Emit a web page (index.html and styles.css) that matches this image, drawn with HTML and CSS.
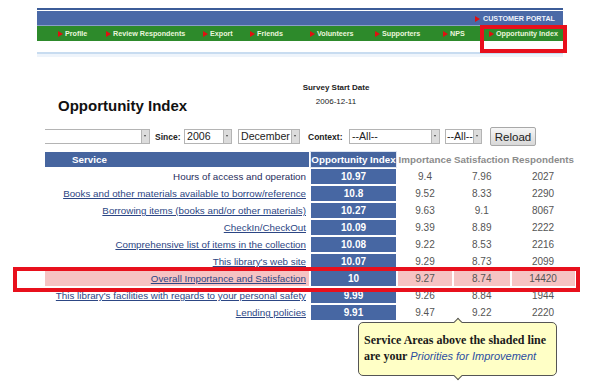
FILE: index.html
```html
<!DOCTYPE html>
<html lang="en">
<head>
  <meta charset="UTF-8" />
  <meta name="viewport" content="width=device-width, initial-scale=1.0"/>
  <title>Opportunity Index</title>
  <link rel="stylesheet" href="styles.css">
</head>
<body>
  <div class="banner">
    <div class="portal"><span class="arrow"></span>CUSTOMER PORTAL</div>
    <ul class="nav">
      <li><span class="arrow"></span>Profile</li>
      <li><span class="arrow"></span>Review Respondents</li>
      <li><span class="arrow"></span>Export</li>
      <li><span class="arrow"></span>Friends</li>
      <li><span class="arrow"></span>Volunteers</li>
      <li><span class="arrow"></span>Supporters</li>
      <li><span class="arrow"></span>NPS</li>
      <li><span class="arrow"></span>Opportunity Index</li>
    </ul>
  </div>
  <div class="rule"></div>

  <div class="intro">
    <h1>Opportunity Index</h1>
    <div class="survey">
      <b>Survey Start Date</b><br>
      2006-12-11
    </div>
  </div>

  <div class="filters">
    <div class="select sel-first"><span></span><i></i></div>
    <label class="since">Since:</label>
    <div class="select sel-year"><span>2006</span><i></i></div>
    <div class="select sel-month"><span>December</span><i></i></div>
    <label class="context">Context:</label>
    <div class="select sel-context"><span>--All--</span><i></i></div>
    <div class="select sel-small"><span>--All--</span><i></i></div>
    <button type="button">Reload</button>
  </div>

  <table class="results">
    <thead>
      <tr>
        <th class="service">Service</th>
        <th class="opp">Opportunity Index</th>
        <th>Importance</th>
        <th>Satisfaction</th>
        <th>Respondents</th>
      </tr>
    </thead>
    <tbody>
      <tr><td class="service plain">Hours of access and operation</td><td class="opp">10.97</td><td>9.4</td><td>7.96</td><td>2027</td></tr>
      <tr><td class="service"><a href="#">Books and other materials available to borrow/reference</a></td><td class="opp">10.8</td><td>9.52</td><td>8.33</td><td>2290</td></tr>
      <tr><td class="service"><a href="#">Borrowing items (books and/or other materials)</a></td><td class="opp">10.27</td><td>9.63</td><td>9.1</td><td>8067</td></tr>
      <tr><td class="service"><a href="#">CheckIn/CheckOut</a></td><td class="opp">10.09</td><td>9.39</td><td>8.89</td><td>2222</td></tr>
      <tr><td class="service"><a href="#">Comprehensive list of items in the collection</a></td><td class="opp">10.08</td><td>9.22</td><td>8.53</td><td>2216</td></tr>
      <tr><td class="service"><a href="#">This library's web site</a></td><td class="opp">10.07</td><td>9.29</td><td>8.73</td><td>2099</td></tr>
      <tr class="overall"><td class="service"><a href="#">Overall Importance and Satisfaction</a></td><td class="opp">10</td><td>9.27</td><td>8.74</td><td>14420</td></tr>
      <tr><td class="service"><a href="#">This library's facilities with regards to your personal safety</a></td><td class="opp">9.99</td><td>9.26</td><td>8.84</td><td>1944</td></tr>
      <tr><td class="service"><a href="#">Lending policies</a></td><td class="opp">9.91</td><td>9.47</td><td>9.22</td><td>2220</td></tr>
    </tbody>
  </table>

  <div class="mark mark-nav"></div>
  <div class="mark mark-row"></div>

  <div class="callout">
    Service Areas above the shaded line<br>
    are your <em>Priorities for Improvement</em>
  </div>
</body>
</html>
```

FILE: styles.css
```css
body {
  margin: 0;
  padding: 0;
  background: white;
  font-family: "Liberation Sans", Arial, sans-serif;
  color: #333;
  position: relative;
  width: 600px;
  height: 389px;
  overflow: hidden;
}

.banner {
  margin: 8px 0 0 37px;
  width: 526px;
  border-top: 2px solid #3c5c98;
  padding-top: 1px;
}

.portal {
  height: 14px;
  background: #4a69a7;
  border-bottom: 1px solid #8aa0c8;
  color: #eef2fa;
  font-size: 7.2px;
  font-weight: bold;
  line-height: 15px;
  text-align: right;
  padding-right: 8px;
}

.arrow {
  display: inline-block;
  width: 0;
  height: 0;
  border-top: 3px solid transparent;
  border-bottom: 3px solid transparent;
  border-left: 5px solid #e01010;
  margin-right: 2px;
  vertical-align: -1px;
}

.portal .arrow {
  margin-right: 3px;
}

.nav {
  list-style: none;
  margin: 0;
  padding: 0 0 0 21px;
  height: 15px;
  background: #2d8a2b;
  display: grid;
  grid-template-columns: 48px 97px 47px 60px 65px 68px 46px 1fr;
  color: #eaf6dc;
  font-size: 7.2px;
  font-weight: bold;
  line-height: 15px;
  white-space: nowrap;
}

.rule {
  margin: 11px 0 0 37px;
  width: 526px;
  height: 2px;
  background: #c8dcf0;
  border-bottom: 3px solid #eef4fb;
}

.intro {
  display: flex;
  padding-left: 58px;
  margin-top: 24px;
  height: 34px;
}

h1 {
  width: 238px;
  margin: 16px 0 0;
  font-size: 15px;
  line-height: 18px;
  color: #111;
}

.survey {
  width: 80px;
  text-align: center;
  font-size: 8px;
  line-height: 14px;
  color: #222;
}

.filters {
  display: flex;
  align-items: center;
  height: 19px;
  margin-top: 12px;
  padding-left: 45px;
}

.select {
  box-sizing: border-box;
  height: 15px;
  display: flex;
  border: 1px solid #b4b4b4;
  background: white;
  font-size: 10.6px;
  line-height: 13px;
  color: #222;
}

.select span {
  flex: 1;
  padding-left: 2px;
  white-space: nowrap;
  overflow: hidden;
}

.select i {
  width: 7px;
  background: #dcdcdc;
  border-left: 1px solid #b4b4b4;
  position: relative;
}

.select i::after {
  content: "";
  position: absolute;
  left: 2px;
  top: 5px;
  border-left: 1.5px solid transparent;
  border-right: 1.5px solid transparent;
  border-top: 2px solid #444;
}

.sel-first { width: 105px; border-left: none; margin-right: 5px; }
.sel-year { width: 48px; margin-right: 6px; }
.sel-month { width: 62px; margin-right: 8px; }
.sel-context { width: 91px; margin-right: 5px; }
.sel-small { width: 37px; margin-right: 8px; }
.sel-small span { padding-left: 1px; }

.filters label {
  font-size: 8.5px;
  font-weight: bold;
  color: #222;
}

.since { width: 29px; }
.context { width: 41px; }

button {
  box-sizing: border-box;
  width: 46px;
  height: 19px;
  padding: 0;
  border: 1px solid #a8a8a8;
  border-radius: 2px;
  background: linear-gradient(#f6f6f6, #d8d8d8);
  font-family: "Liberation Sans", Arial, sans-serif;
  font-size: 11.5px;
  color: #222;
}

.results {
  margin: 4px 0 0 43px;
  border-collapse: separate;
  border-spacing: 2px;
  font-size: 10px;
}

.results th,
.results td {
  height: 15px;
  padding: 0;
  line-height: 15px;
  text-align: center;
  white-space: nowrap;
}

.results th {
  font-size: 9.8px;
  font-weight: bold;
  color: #8c8c8c;
}

.results th.service {
  width: 264px;
  text-align: left;
  padding-left: 27px;
  box-sizing: border-box;
  background: #46659f;
  color: white;
}

.results th.opp {
  width: 85px;
  background: #46659f;
  color: white;
  box-shadow: 0 0 0 1px #dfe6f2;
}

.results th:nth-child(3) { width: 54px; }
.results th:nth-child(4) { width: 55px; }
.results th:nth-child(5) { width: 63px; }

.results td {
  color: #555;
}

.results td.service {
  text-align: right;
  padding-right: 3px;
  font-size: 9.8px;
}

.results td.plain {
  color: #1f2d5c;
}

.results td.service a {
  color: #2c4684;
  text-decoration: underline;
}

.results td.opp {
  background: #4767a3;
  color: white;
  font-weight: bold;
}

.overall td {
  background: #f6c3c3;
}

.mark {
  position: absolute;
  box-sizing: border-box;
  border: 4px solid #e8101c;
}

.mark-nav {
  left: 480px;
  top: 25px;
  width: 87px;
  height: 28px;
}

.mark-row {
  left: 13px;
  top: 267px;
  width: 567px;
  height: 25px;
}

.callout {
  position: absolute;
  left: 358px;
  top: 322px;
  width: 199px;
  height: 54px;
  box-sizing: border-box;
  padding: 9px 0 0 5px;
  background: #ffffc6;
  border: 1px solid #555;
  border-radius: 5px;
  font-family: "Liberation Serif", "Times New Roman", serif;
  font-size: 12px;
  font-weight: bold;
  line-height: 16px;
  color: #1a1a1a;
}

.callout em {
  font-family: "Liberation Sans", Arial, sans-serif;
  font-size: 11px;
  font-weight: normal;
  color: #2b4ea2;
}

.callout::before,
.callout::after {
  content: "";
  position: absolute;
  left: 96px;
  width: 5px;
  height: 5px;
  background: #ffffc6;
  transform: rotate(45deg);
}

.callout::before {
  top: -4px;
  border-top: 1px solid #555;
  border-left: 1px solid #555;
}

.callout::after {
  bottom: -4px;
  border-bottom: 1px solid #555;
  border-right: 1px solid #555;
}
```
